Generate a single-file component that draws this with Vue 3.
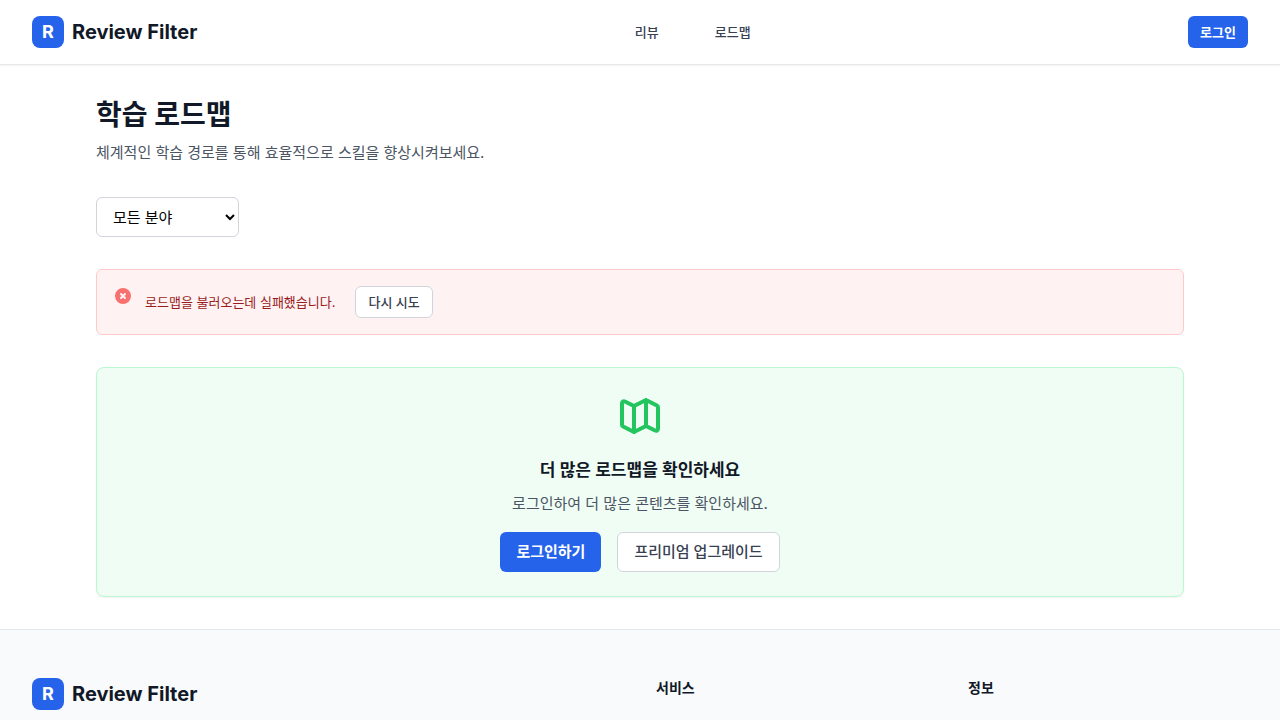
<script setup>
const nav = ['리뷰', '로드맵']
const fields = ['모든 분야', '프로그래밍', '데이터 사이언스', '디자인', '마케팅', '비즈니스']
const footerGroups = ['서비스', '정보']
</script>

<template>
  <div class="page">
    <header class="topbar">
      <a class="brand" href="#"><span class="mark">R</span><span class="name">Review Filter</span></a>
      <nav class="nav">
        <a v-for="item in nav" :key="item" href="#">{{ item }}</a>
      </nav>
      <button class="btn primary small" type="button">로그인</button>
    </header>

    <main class="main">
      <h1>학습 로드맵</h1>
      <p class="lead">체계적인 학습 경로를 통해 효율적으로 스킬을 향상시켜보세요.</p>
      <select class="filter" aria-label="분야">
        <option v-for="field in fields" :key="field">{{ field }}</option>
      </select>

      <div class="alert" role="alert">
        <svg class="alert-icon" viewBox="0 0 20 20" fill="currentColor" aria-hidden="true">
          <path fill-rule="evenodd" clip-rule="evenodd" d="M10 18a8 8 0 100-16 8 8 0 000 16zM8.707 7.293a1 1 0 00-1.414 1.414L8.586 10l-1.293 1.293a1 1 0 101.414 1.414L10 11.414l1.293 1.293a1 1 0 001.414-1.414L11.414 10l1.293-1.293a1 1 0 00-1.414-1.414L10 8.586 8.707 7.293z" />
        </svg>
        <p>로드맵을 불러오는데 실패했습니다.</p>
        <button class="btn outline small" type="button">다시 시도</button>
      </div>

      <section class="promo">
        <svg class="map" viewBox="0 0 24 24" fill="none" stroke="currentColor" stroke-width="2" stroke-linecap="round" stroke-linejoin="round" aria-hidden="true">
          <path d="M9 20l-5.447-2.724A1 1 0 013 16.382V5.618a1 1 0 011.447-.894L9 7m0 13l6-3m-6 3V7m6 10l4.553 2.276A1 1 0 0021 18.382V7.618a1 1 0 00-.553-.894L15 4m0 13V4m0 0L9 7" />
        </svg>
        <h2>더 많은 로드맵을 확인하세요</h2>
        <p>로그인하여 더 많은 콘텐츠를 확인하세요.</p>
        <div class="actions">
          <button class="btn primary" type="button">로그인하기</button>
          <button class="btn outline" type="button">프리미엄 업그레이드</button>
        </div>
      </section>
    </main>

    <footer class="footer">
      <div class="about">
        <a class="brand" href="#"><span class="mark">R</span><span class="name">Review Filter</span></a>
      </div>
      <h3 v-for="group in footerGroups" :key="group">{{ group }}</h3>
    </footer>
  </div>
</template>

<style>
body {
  margin: 0;
  background: #fff;
}
</style>

<style scoped>
.page {
  font-family: Inter, "Noto Sans CJK KR", sans-serif;
  font-size: 15px;
  line-height: 24px;
  color: #111827;
  height: 100vh;
  overflow: hidden;
}
.page *, .page { box-sizing: border-box; }
h1, h2, h3, p { margin: 0; }
a { color: inherit; text-decoration: none; }
.topbar {
  display: flex;
  align-items: center;
  justify-content: space-between;
  height: 65px;
  padding: 0 32px;
  border-bottom: 1px solid #e5e7eb;
  box-shadow: 0 1px 2px rgb(0 0 0 / 5%);
}
.brand { display: inline-flex; align-items: center; gap: 8px; }
.mark {
  display: grid;
  place-items: center;
  width: 32px;
  height: 32px;
  border-radius: 8px;
  background: #2563eb;
  color: #fff;
  font-size: 18px;
  font-weight: 700;
}
.name { font-size: 20px; line-height: 28px; font-weight: 700; }
.nav { display: flex; gap: 32px; }
.nav a {
  padding: 8px 12px;
  font-size: 13px;
  line-height: 20px;
  font-weight: 500;
  color: #374151;
}
.btn {
  height: 40px;
  padding: 0 16px;
  border: 1px solid transparent;
  border-radius: 6px;
  font-family: inherit;
  font-size: 15px;
  line-height: 24px;
  font-weight: 500;
  white-space: nowrap;
}
.small { height: 32px; padding: 0 12px; font-size: 13px; line-height: 20px; }
.primary { background: #2563eb; color: #fff; border: 0; font-weight: 600; }
.outline { background: #fff; color: #374151; border-color: #d1d5db; }
.main {
  max-width: 1152px;
  margin: 0 auto;
  padding: 32px;
}
h1 { font-size: 28px; line-height: 36px; font-weight: 700; }
.lead { margin-top: 8px; color: #4b5563; }
.filter {
  display: block;
  width: 143px;
  height: 40px;
  margin-top: 32px;
  padding: 0 12px;
  border: 1px solid #d1d5db;
  border-radius: 6px;
  background: #fff;
  color: #000;
  font-family: inherit;
  font-size: 15px;
}
.alert {
  display: flex;
  align-items: center;
  margin-top: 32px;
  padding: 16px;
  border: 1px solid #fecaca;
  border-radius: 6px;
  background: #fef2f2;
  color: #991b1b;
  font-size: 13px;
  line-height: 20px;
}
.alert-icon { width: 20px; height: 20px; align-self: flex-start; color: #f87171; }
.alert p { margin: 0 20px 0 12px; }
.promo {
  display: flex;
  flex-direction: column;
  align-items: center;
  margin-top: 32px;
  padding: 24px;
  border: 1px solid #bbf7d0;
  border-radius: 8px;
  background: #f0fdf4;
  box-shadow: 0 1px 2px rgb(0 0 0 / 5%);
}
.map { width: 48px; height: 48px; color: #22c55e; }
h2 { margin-top: 16px; font-size: 17px; line-height: 28px; font-weight: 600; }
.promo p { margin-top: 8px; color: #4b5563; }
.actions { display: flex; gap: 16px; margin-top: 16px; }
.footer {
  display: grid;
  grid-template-columns: repeat(4, 1fr);
  gap: 32px;
  padding: 48px 32px;
  border-top: 1px solid #e5e7eb;
  background: #f9fafb;
}
.about { grid-column: span 2; }
h3 { font-size: 14px; line-height: 20px; font-weight: 600; }
</style>
